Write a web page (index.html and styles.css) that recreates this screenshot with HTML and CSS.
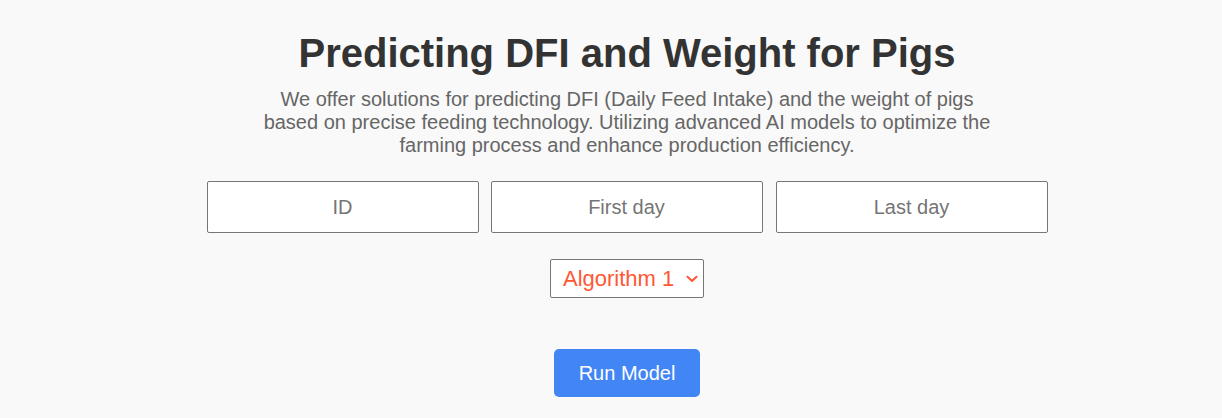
FILE: index.html
```html
<!DOCTYPE html>
<html lang="en">
<head>
<meta charset="utf-8">
<title>Predicting DFI and Weight for Pigs</title>
<link rel="stylesheet" href="styles.css">
</head>
<body>
<main class="page">
  <h1 class="title">Predicting DFI and Weight for Pigs</h1>
  <p class="intro">We offer solutions for predicting DFI (Daily Feed Intake) and the weight of pigs based on precise feeding technology. Utilizing advanced AI models to optimize the farming process and enhance production efficiency.</p>
  <div class="fields">
    <input class="field" type="text" placeholder="ID">
    <input class="field" type="text" placeholder="First day">
    <input class="field" type="text" placeholder="Last day">
  </div>
  <div class="algo-row">
    <select class="algo">
      <option>Algorithm 1</option>
      <option>Algorithm 2</option>
    </select>
  </div>
  <div class="run-row">
    <button class="run" type="button">Run Model</button>
  </div>
</main>
</body>
</html>
```
FILE: styles.css
```css
html, body {
  margin: 0;
  padding: 0;
  background: #f9f9f9;
}
body {
  font-family: "Liberation Sans", Arial, sans-serif;
  color: #333;
}
.page {
  margin-left: 32px;
  display: flex;
  flex-direction: column;
  align-items: center;
  padding-top: 30px;
}
.title {
  margin: 0;
  font-size: 40px;
  font-weight: bold;
  color: #333;
  line-height: 46px;
}
.intro {
  margin: 12px 0 0;
  width: 736px;
  text-align: center;
  font-size: 20px;
  line-height: 23px;
  color: #666;
}
.fields {
  display: flex;
  gap: 12px;
  margin-top: 24px;
}
.field {
  box-sizing: border-box;
  width: 272px;
  height: 52px;
  border: 1px solid #767676;
  border-radius: 2px;
  background: #fff;
  font-family: "Liberation Sans", Arial, sans-serif;
  font-size: 20px;
  text-align: center;
  color: #333;
  padding: 0 8px;
}
.field:last-child {
  margin-left: 1px;
}
.field::placeholder {
  color: #757575;
}
.algo-row {
  margin-top: 26px;
}
.algo {
  -webkit-appearance: none;
  appearance: none;
  box-sizing: border-box;
  width: 154px;
  height: 39px;
  border: 1px solid #767676;
  border-radius: 2px;
  background-color: #fff;
  background-image: url("data:image/svg+xml,%3Csvg xmlns='http://www.w3.org/2000/svg' width='12' height='8' viewBox='0 0 12 8'%3E%3Cpath d='M1.5 1.8 L6 6 L10.5 1.8' fill='none' stroke='%23ff5733' stroke-width='2' stroke-linecap='round' stroke-linejoin='round'/%3E%3C/svg%3E");
  background-repeat: no-repeat;
  background-position: right 5px center;
  background-size: 12px 8px;
  color: #ff5733;
  font-family: "Liberation Sans", Arial, sans-serif;
  font-size: 22px;
  padding: 0 20px 0 12px;
}
.run-row {
  margin-top: 51px;
}
.run {
  width: 146px;
  height: 48px;
  border: none;
  border-radius: 5px;
  background: #4285f4;
  color: #fff;
  font-family: "Liberation Sans", Arial, sans-serif;
  font-size: 20px;
  cursor: pointer;
}
```
